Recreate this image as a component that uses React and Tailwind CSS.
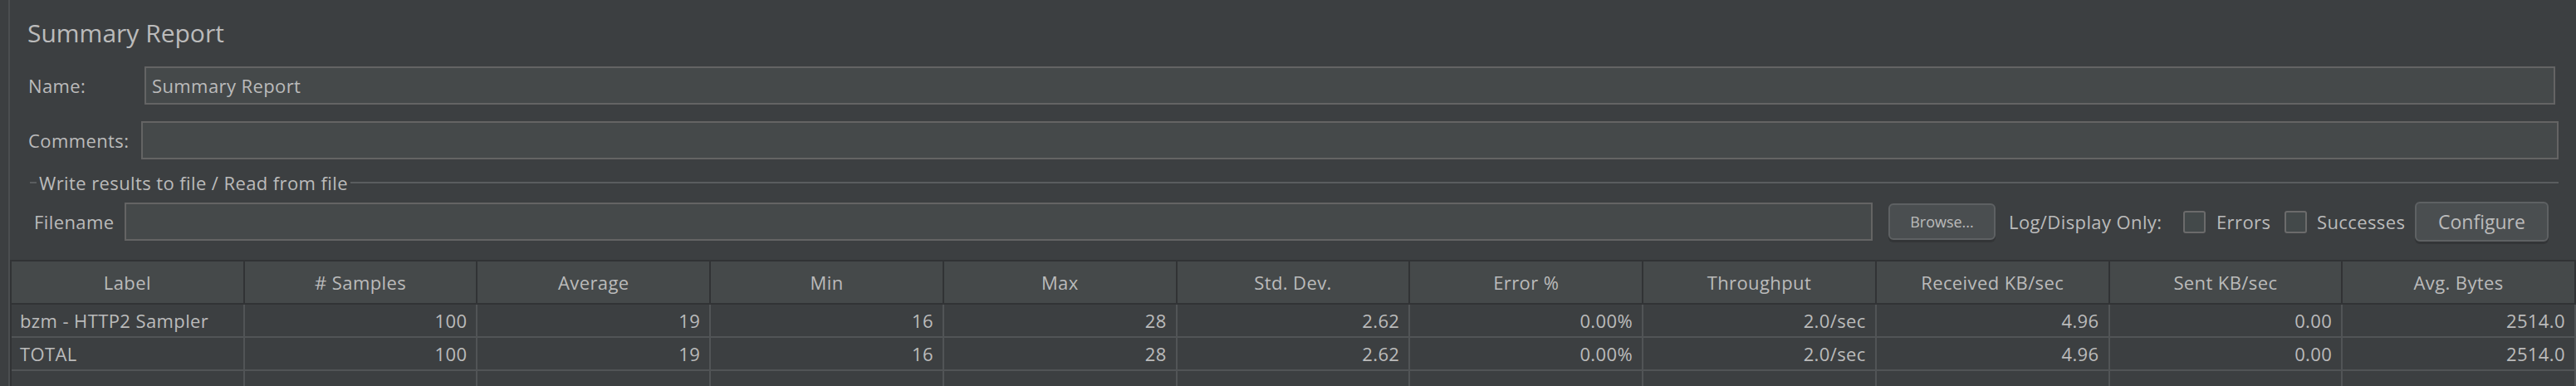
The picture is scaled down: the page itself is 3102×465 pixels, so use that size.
import React from 'react';

const columns = [
  'Label', '# Samples', 'Average', 'Min', 'Max', 'Std. Dev.',
  'Error %', 'Throughput', 'Received KB/sec', 'Sent KB/sec', 'Avg. Bytes',
];

const rows = [
  ['bzm - HTTP2 Sampler', '100', '19', '16', '28', '2.62', '0.00%', '2.0/sec', '4.96', '0.00', '2514.0'],
  ['TOTAL', '100', '19', '16', '28', '2.62', '0.00%', '2.0/sec', '4.96', '0.00', '2514.0'],
  ['', '', '', '', '', '', '', '', '', '', ''],
];

const Field = ({ value, className = '' }) => (
  <div className={`h-[46px] bg-[#45494a] border-2 border-[#646464] flex items-center px-[7px] ${className}`}>
    {value}
  </div>
);

const Checkbox = () => (
  <div className="w-[27px] h-[27px] shrink-0 rounded-[3px] border-2 border-[#6b6b6b] bg-[#43494a]" />
);

const SummaryReport = () => {
  return (
    <div
      className="w-[3102px] h-[465px] overflow-hidden bg-[#3c3f41] text-[#bbbbbb] text-[22px] tracking-[0.4px] flex"
      style={{ fontFamily: '"Open Sans", "Noto Sans", sans-serif' }}
    >
      {/* left tree splitter */}
      <div className="w-[10px] shrink-0" />
      <div className="w-[2px] shrink-0 bg-[#4b4e50]" />

      <div className="flex-1 flex flex-col min-w-0">
        {/* title */}
        <div className="mt-[20px] h-[40px] leading-[40px] pl-[21px] text-[30px] tracking-normal">Summary Report</div>

        {/* name */}
        <div className="mt-[20px] flex items-center pl-[22px] pr-[25px]">
          <span className="w-[140px] shrink-0">Name:</span>
          <Field value="Summary Report" className="flex-1" />
        </div>

        {/* comments */}
        <div className="mt-[20px] flex items-center pl-[22px] pr-[21px]">
          <span className="w-[136px] shrink-0">Comments:</span>
          <Field className="flex-1" />
        </div>

        {/* file panel title */}
        <div className="mt-[17px] h-[22px] flex items-center pl-[24px] pr-[21px]">
          <div className="w-[8px] h-[2px] bg-[#5a5d5f]" />
          <span className="px-[3px] leading-[22px]">Write results to file / Read from file</span>
          <div className="flex-1 h-[2px] bg-[#5a5d5f]" />
        </div>

        {/* filename row */}
        <div className="mt-[12px] h-[48px] flex items-center pl-[29px] pr-[33px] whitespace-nowrap">
          <span className="w-[109px] shrink-0">Filename</span>
          <Field className="flex-1" />
          <button className="ml-[19px] h-[44px] w-[129px] shrink-0 rounded-[6px] border-2 border-[#5e6163] bg-[#4a4e50] shadow-[0_3px_0_#333537] text-[18px] tracking-normal">
            Browse...
          </button>
          <span className="ml-[16px] w-[187px] shrink-0">Log/Display Only:</span>
          <div className="ml-[23px]"><Checkbox /></div>
          <span className="ml-[13px] w-[59px] shrink-0">Errors</span>
          <div className="ml-[23px]"><Checkbox /></div>
          <span className="ml-[12px] w-[104px] shrink-0">Successes</span>
          <button className="ml-[14px] h-[48px] w-[161px] shrink-0 rounded-[6px] border-2 border-[#5e6163] bg-[#4a4e50] shadow-[0_3px_0_#333537] text-[23px] tracking-normal">
            Configure
          </button>
        </div>

        {/* results table */}
        <div className="mt-[22px] border-l-2 border-[#313335]">
          <div className="grid grid-cols-11 bg-[#45494a] border-y-2 border-[#313335]">
            {columns.map((c) => (
              <div key={c} className="h-[50px] flex items-center justify-center border-r-2 border-[#313335]">
                {c}
              </div>
            ))}
          </div>
          {rows.map((r, i) => (
            <div key={i} className="grid grid-cols-11">
              {r.map((v, j) => (
                <div
                  key={j}
                  className={`h-[40px] flex items-center border-r-2 border-b-2 border-[#515456] ${
                    j === 0 ? 'justify-start pl-[10px]' : 'justify-end pr-[11px]'
                  }`}
                >
                  {v}
                </div>
              ))}
            </div>
          ))}
        </div>
      </div>
    </div>
  );
};

export default function App() {
  return <SummaryReport />;
}
